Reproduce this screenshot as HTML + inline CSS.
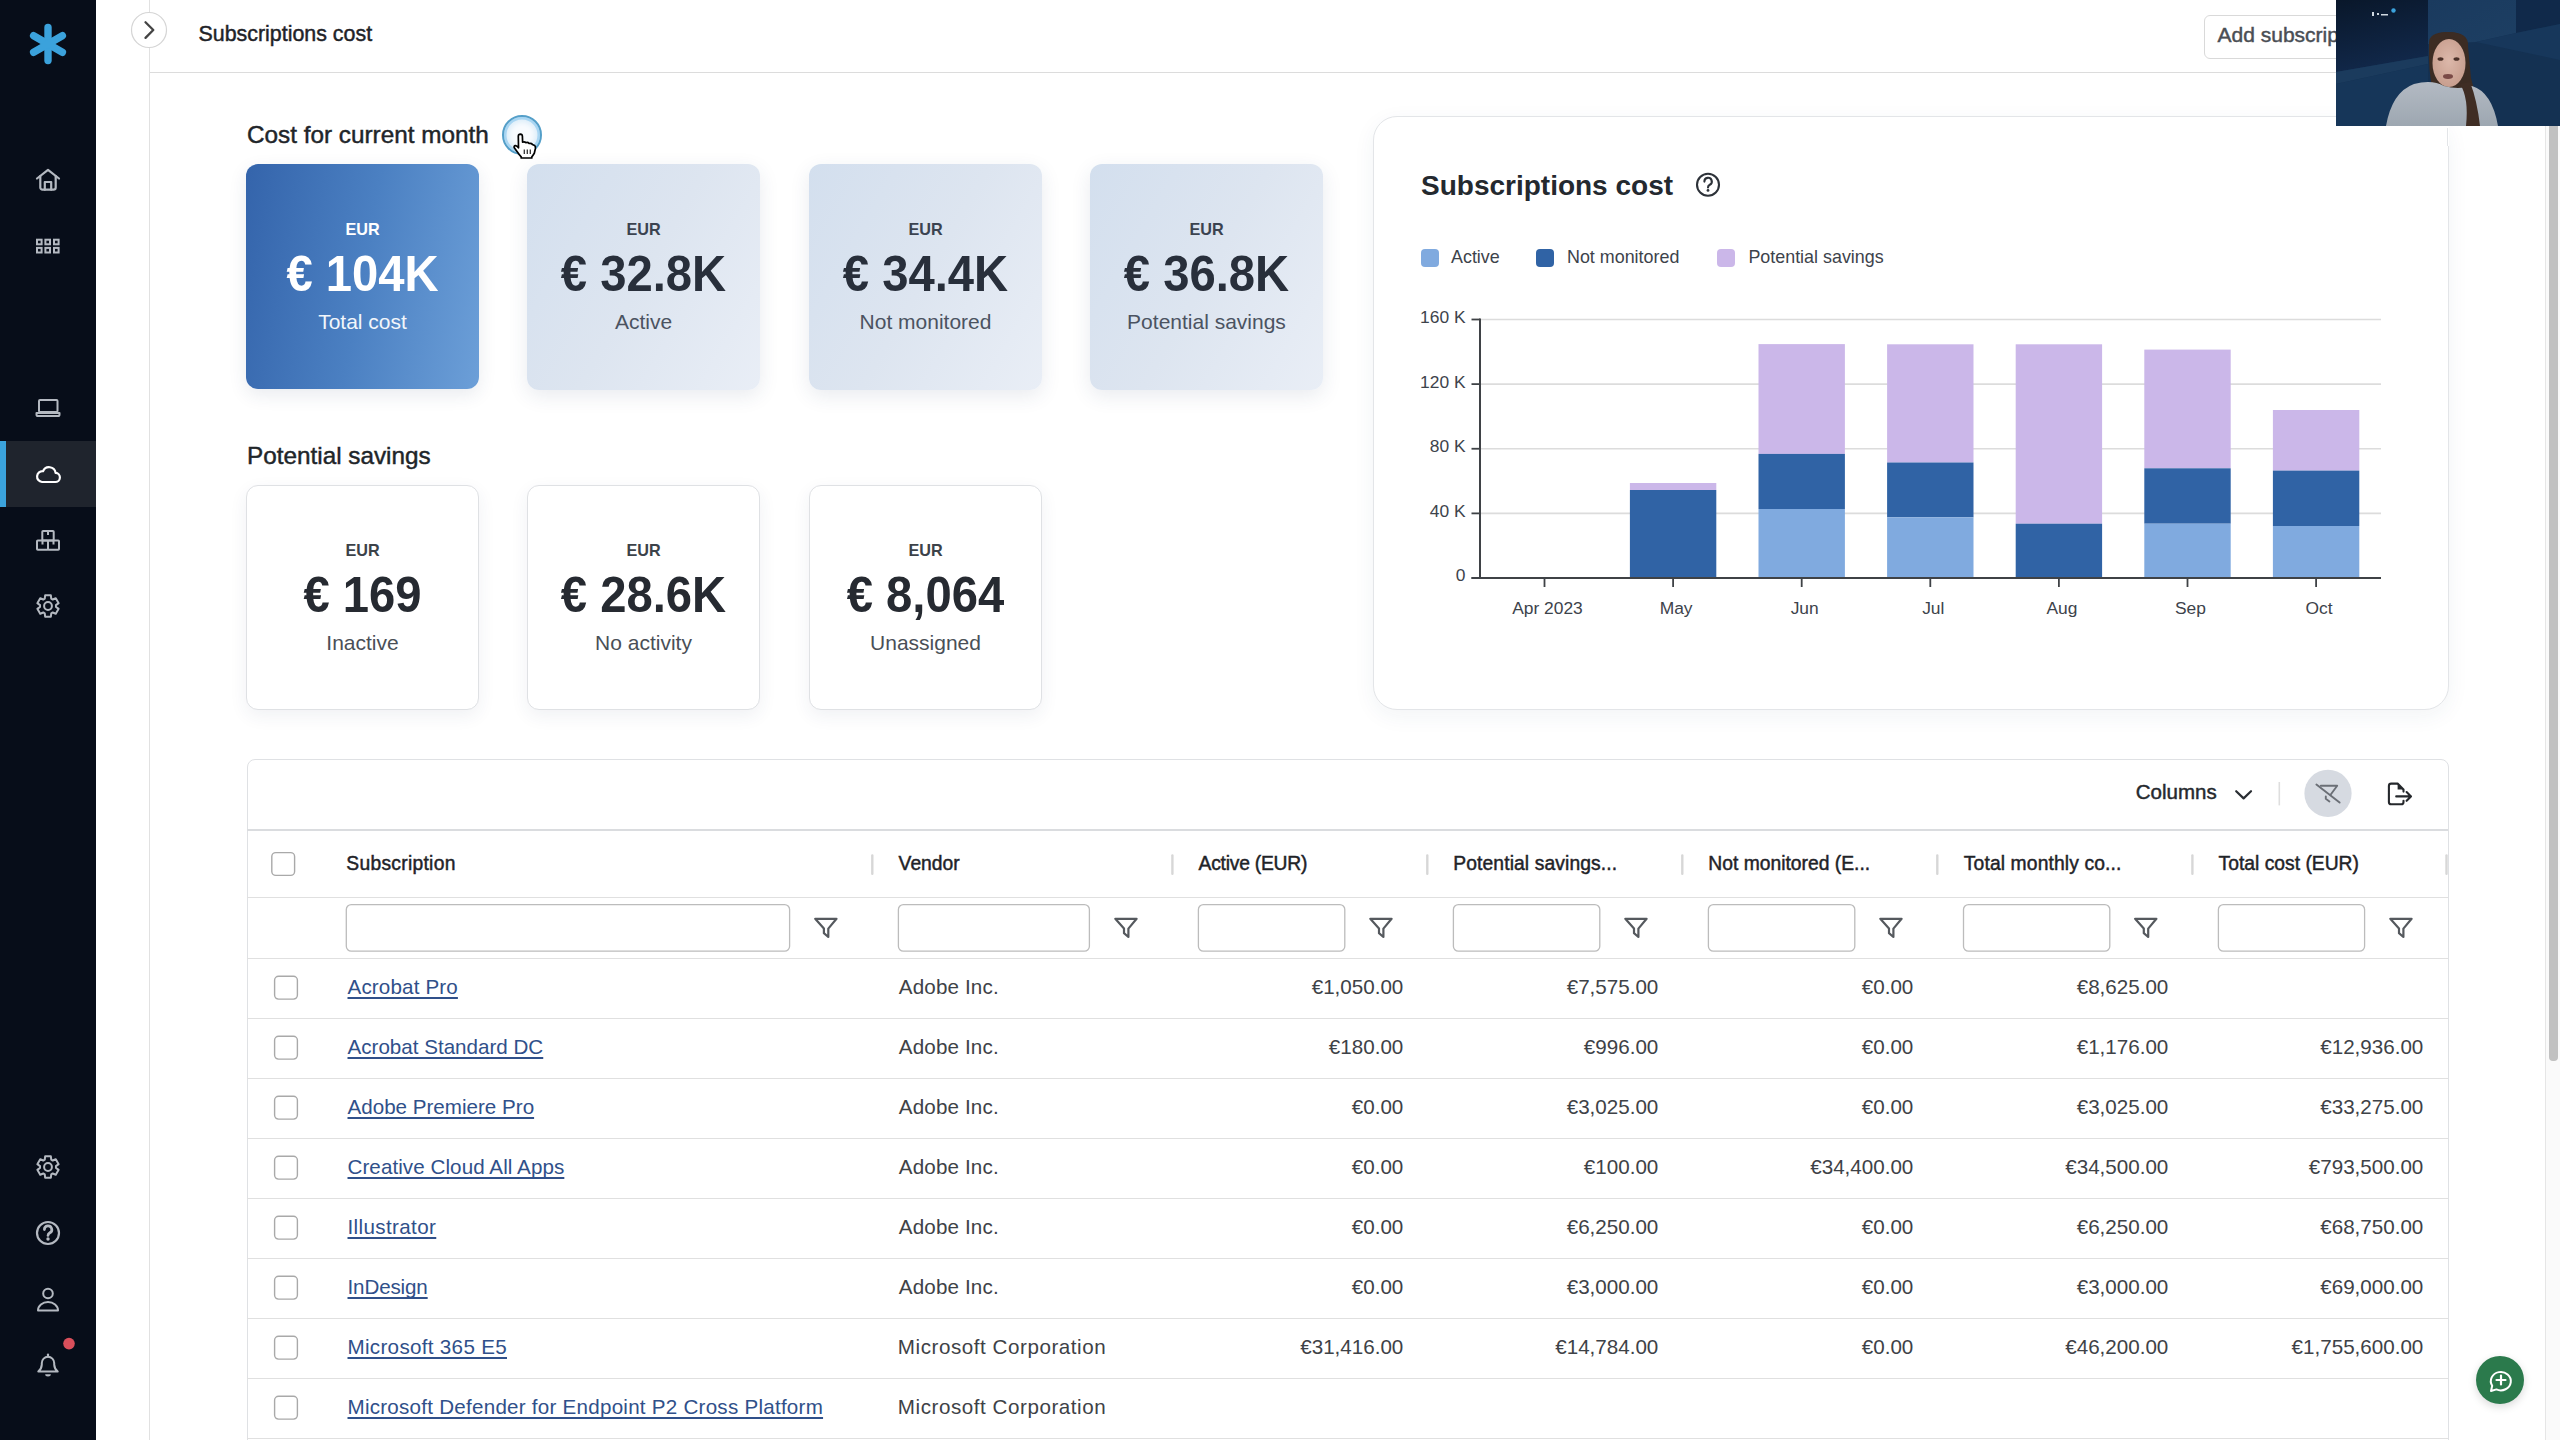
<!DOCTYPE html>
<html><head><meta charset="utf-8"><title>Subscriptions cost</title>
<style>
html,body{margin:0;padding:0;width:2560px;height:1440px;overflow:hidden;background:#fff;font-family:"Liberation Sans", sans-serif;}
.t{position:absolute;white-space:nowrap;font-family:"Liberation Sans", sans-serif;}
</style></head><body>
<div style="position:absolute;left:0px;top:0px;width:96px;height:1440px;background:#070d19;"></div><div style="position:absolute;left:0px;top:441px;width:96px;height:66px;background:#1f242d;"></div><div style="position:absolute;left:0px;top:441px;width:6px;height:66px;background:#3ba3dc;"></div><svg style="position:absolute;left:0;top:0" width="96" height="1440"><line x1="48" y1="27.4" x2="48" y2="60.6" stroke="#3ba2dc" stroke-width="7.4" stroke-linecap="round" transform="rotate(0 48 44)"/><line x1="48" y1="27.4" x2="48" y2="60.6" stroke="#3ba2dc" stroke-width="7.4" stroke-linecap="round" transform="rotate(-60 48 44)"/><line x1="48" y1="27.4" x2="48" y2="60.6" stroke="#3ba2dc" stroke-width="7.4" stroke-linecap="round" transform="rotate(-120 48 44)"/><g fill="none" stroke="#b4b9c1" stroke-width="2.2" stroke-linecap="round" stroke-linejoin="round"><path d="M37 178.5 L48 169.8 L59 178.5"/><path d="M40.3 176 V187.5 a2.2 2.2 0 0 0 2.2 2.2 H53.5 a2.2 2.2 0 0 0 2.2 -2.2 V176"/><path d="M44.8 189.7 V182 H51.2 V189.7"/></g><rect x="37.00" y="239.70" width="4.6" height="4.6" fill="none" stroke="#b4b9c1" stroke-width="2"/><rect x="37.00" y="247.90" width="4.6" height="4.6" fill="none" stroke="#b4b9c1" stroke-width="2"/><rect x="45.40" y="239.70" width="4.6" height="4.6" fill="none" stroke="#b4b9c1" stroke-width="2"/><rect x="45.40" y="247.90" width="4.6" height="4.6" fill="none" stroke="#b4b9c1" stroke-width="2"/><rect x="54.00" y="239.70" width="4.6" height="4.6" fill="none" stroke="#b4b9c1" stroke-width="2"/><rect x="54.00" y="247.90" width="4.6" height="4.6" fill="none" stroke="#b4b9c1" stroke-width="2"/><g fill="none" stroke="#b4b9c1" stroke-width="2" stroke-linejoin="round"><rect x="39" y="400" width="18.5" height="12" rx="1"/><path d="M36.5 413 H59.5 V414.5 a1.6 1.6 0 0 1 -1.6 1.6 H38.1 a1.6 1.6 0 0 1 -1.6 -1.6 Z"/></g><path d="M42 482 H55 a4.6 4.6 0 0 0 0.6 -9.2 a6.6 6.6 0 0 0 -12.6 -1.6 a5.4 5.4 0 0 0 -1 10.8 Z" fill="none" stroke="#ffffff" stroke-width="2.2" stroke-linejoin="round"/><g fill="none" stroke="#b4b9c1" stroke-width="2" stroke-linejoin="round"><rect x="42.3" y="531" width="11.4" height="9.5" rx="0.8"/><rect x="37" y="540.5" width="11" height="9.3" rx="0.8"/><rect x="48" y="540.5" width="11" height="9.3" rx="0.8"/><path d="M48 531 V535 M42.5 540.5 V544.5 M53.5 540.5 V544.5"/></g><polygon points="44.75,598.69 45.15,595.37 50.85,595.37 51.25,598.69 52.70,599.53 55.78,598.22 58.63,603.15 55.96,605.16 55.96,606.84 58.63,608.85 55.78,613.78 52.70,612.47 51.25,613.31 50.85,616.63 45.15,616.63 44.75,613.31 43.30,612.47 40.22,613.78 37.37,608.85 40.04,606.84 40.04,605.16 37.37,603.15 40.22,598.22 43.30,599.53" fill="none" stroke="#b4b9c1" stroke-width="2" stroke-linejoin="round"/><circle cx="48" cy="606" r="3.9" fill="none" stroke="#b4b9c1" stroke-width="2"/><polygon points="44.75,1159.69 45.15,1156.37 50.85,1156.37 51.25,1159.69 52.70,1160.53 55.78,1159.22 58.63,1164.15 55.96,1166.16 55.96,1167.84 58.63,1169.85 55.78,1174.78 52.70,1173.47 51.25,1174.31 50.85,1177.63 45.15,1177.63 44.75,1174.31 43.30,1173.47 40.22,1174.78 37.37,1169.85 40.04,1167.84 40.04,1166.16 37.37,1164.15 40.22,1159.22 43.30,1160.53" fill="none" stroke="#b4b9c1" stroke-width="2" stroke-linejoin="round"/><circle cx="48" cy="1167" r="3.9" fill="none" stroke="#b4b9c1" stroke-width="2"/><circle cx="48" cy="1233" r="11" fill="none" stroke="#b4b9c1" stroke-width="2.2"/><path d="M44.4 1229.6 a3.7 3.7 0 1 1 5.5 3.2 c-1.2 0.7 -1.9 1.3 -1.9 2.6" fill="none" stroke="#b4b9c1" stroke-width="2.7" stroke-linecap="round"/><circle cx="48" cy="1239" r="1.7" fill="#b4b9c1"/><circle cx="48" cy="1293.5" r="4.8" fill="none" stroke="#b4b9c1" stroke-width="2"/><path d="M38 1310.5 a10 8.5 0 0 1 20 0 Z" fill="none" stroke="#b4b9c1" stroke-width="2" stroke-linejoin="round"/><path d="M38.3 1371.6 Q41.6 1368.6 41.8 1364.6 V1363 a6.2 6.2 0 0 1 12.4 0 V1364.6 Q54.4 1368.6 57.7 1371.6 Z" fill="none" stroke="#b4b9c1" stroke-width="2" stroke-linejoin="round"/><path d="M48 1354.6 V1356.6" stroke="#b4b9c1" stroke-width="2.2" stroke-linecap="round"/><path d="M45.2 1374.2 a2.8 2.2 0 0 0 5.6 0 Z" fill="#b4b9c1"/><circle cx="69" cy="1343.6" r="5.8" fill="#d94f5b"/></svg><div style="position:absolute;left:149px;top:0px;width:1px;height:1440px;background:#e1e1e1;"></div><div style="position:absolute;left:150px;top:72px;width:2410px;height:1px;background:#dcdcdc;"></div><svg style="position:absolute;left:128px;top:9px" width="42" height="42"><circle cx="21" cy="21" r="17.5" fill="#fff" stroke="#d5d5d5" stroke-width="1.2"/><path d="M17.5 13.3 L25.3 21 L17.5 28.9" fill="none" stroke="#444444" stroke-width="2.3" stroke-linecap="round" stroke-linejoin="round"/></svg><div class="t" style="top:24.18px;font-size:21.4px;line-height:21.4px;font-weight:400;color:#1f2328;left:198.50px;-webkit-text-stroke:0.45px currentColor;">Subscriptions cost</div><div style="position:absolute;left:2204px;top:14.5px;width:250px;height:44px;border:1.5px solid #d9d9d9;border-radius:6px;box-sizing:border-box;background:#fff;"></div><div class="t" style="top:24.12px;font-size:21px;line-height:21px;font-weight:400;color:#4a4e54;left:2217.50px;-webkit-text-stroke:0.45px currentColor;">Add subscription</div><div class="t" style="top:122.53px;font-size:24.3px;line-height:24.3px;font-weight:400;color:#212529;left:247.00px;-webkit-text-stroke:0.45px currentColor;">Cost for current month</div><div style="position:absolute;left:246px;top:164px;width:233px;height:225px;border-radius:12px;background:linear-gradient(100deg,#3464ab 0%,#4b80c2 50%,#6c9fd8 100%);box-shadow:0 6px 18px rgba(40,60,100,0.10);"></div><div class="t" style="top:220.99px;font-size:16.2px;line-height:16.2px;font-weight:700;color:#ffffff;left:262.50px;width:200px;text-align:center;">EUR</div><div class="t" style="top:251.05px;font-size:47.2px;line-height:47.2px;font-weight:700;color:#ffffff;left:246.00px;width:233px;text-align:center;transform:scaleY(1.07);transform-origin:50% 39.95px;">€ 104K</div><div class="t" style="top:311.02px;font-size:21px;line-height:21px;font-weight:400;color:#f2f6fb;left:246.00px;width:233px;text-align:center;">Total cost</div><div style="position:absolute;left:527px;top:164px;width:233px;height:226px;border-radius:12px;background:linear-gradient(120deg,#d3dfee 0%,#dde5f0 50%,#e9eef6 100%);box-shadow:0 6px 20px rgba(40,60,100,0.10);"></div><div class="t" style="top:220.99px;font-size:16.2px;line-height:16.2px;font-weight:700;color:#3b4350;left:543.50px;width:200px;text-align:center;">EUR</div><div class="t" style="top:251.05px;font-size:47.2px;line-height:47.2px;font-weight:700;color:#282f3b;left:527.00px;width:233px;text-align:center;transform:scaleY(1.07);transform-origin:50% 39.95px;">€ 32.8K</div><div class="t" style="top:311.02px;font-size:21px;line-height:21px;font-weight:400;color:#4b5361;left:527.00px;width:233px;text-align:center;">Active</div><div style="position:absolute;left:809px;top:164px;width:233px;height:226px;border-radius:12px;background:linear-gradient(120deg,#d3dfee 0%,#dde5f0 50%,#e9eef6 100%);box-shadow:0 6px 20px rgba(40,60,100,0.10);"></div><div class="t" style="top:220.99px;font-size:16.2px;line-height:16.2px;font-weight:700;color:#3b4350;left:825.50px;width:200px;text-align:center;">EUR</div><div class="t" style="top:251.05px;font-size:47.2px;line-height:47.2px;font-weight:700;color:#282f3b;left:809.00px;width:233px;text-align:center;transform:scaleY(1.07);transform-origin:50% 39.95px;">€ 34.4K</div><div class="t" style="top:311.02px;font-size:21px;line-height:21px;font-weight:400;color:#4b5361;left:809.00px;width:233px;text-align:center;">Not monitored</div><div style="position:absolute;left:1090px;top:164px;width:233px;height:226px;border-radius:12px;background:linear-gradient(120deg,#d3dfee 0%,#dde5f0 50%,#e9eef6 100%);box-shadow:0 6px 20px rgba(40,60,100,0.10);"></div><div class="t" style="top:220.99px;font-size:16.2px;line-height:16.2px;font-weight:700;color:#3b4350;left:1106.50px;width:200px;text-align:center;">EUR</div><div class="t" style="top:251.05px;font-size:47.2px;line-height:47.2px;font-weight:700;color:#282f3b;left:1090.00px;width:233px;text-align:center;transform:scaleY(1.07);transform-origin:50% 39.95px;">€ 36.8K</div><div class="t" style="top:311.02px;font-size:21px;line-height:21px;font-weight:400;color:#4b5361;left:1090.00px;width:233px;text-align:center;">Potential savings</div><div style="position:absolute;left:501.5px;top:114.5px;width:40px;height:40px;border-radius:50%;box-sizing:border-box;border:2.6px solid #549fc9;box-shadow:inset 0 0 0 2.5px #a9d6f3, inset 0 0 5px 5px #dcedf9;background:#f8fbfe;"></div><svg style="position:absolute;left:512px;top:132px" width="30" height="30"><path d="M6.5 14.5 L6.3 4.2 Q6.4 2.2 8.4 2.2 Q10.3 2.3 10.4 4.2 L10.6 10.2 Q12.6 9.4 13.9 10.7 Q15.9 10 17.1 11.5 Q19.2 10.9 20.4 12.4 L22.6 13.4 Q23.8 14.4 23.3 17 L22.3 21.3 Q20.8 23.8 19.8 24.8 L19.8 26 L9.2 26 L9.2 24.8 Q7.2 22.8 5.2 19.8 L2.3 15.8 Q1.5 14.2 3.2 13.6 Q4.8 13.3 6.5 15.8 Z" fill="#fff" stroke="#000" stroke-width="1.7" stroke-linejoin="round"/><path d="M12.3 17.5 V22 M15.3 17.5 V22 M18.3 17.5 V22" stroke="#333" stroke-width="1.3"/></svg><div class="t" style="top:443.63px;font-size:24.3px;line-height:24.3px;font-weight:400;color:#212529;left:247.00px;-webkit-text-stroke:0.45px currentColor;">Potential savings</div><div style="position:absolute;left:246px;top:485px;width:233px;height:225px;border-radius:12px;background:#fff;border:1.2px solid #dfe1e4;box-sizing:border-box;box-shadow:0 6px 18px rgba(40,60,100,0.07);"></div><div class="t" style="top:542.19px;font-size:16.2px;line-height:16.2px;font-weight:700;color:#3c4249;left:262.50px;width:200px;text-align:center;">EUR</div><div class="t" style="top:572.35px;font-size:47.2px;line-height:47.2px;font-weight:700;color:#262a31;left:246.00px;width:233px;text-align:center;transform:scaleY(1.07);transform-origin:50% 39.95px;">€ 169</div><div class="t" style="top:631.82px;font-size:21px;line-height:21px;font-weight:400;color:#4a4f57;left:246.00px;width:233px;text-align:center;">Inactive</div><div style="position:absolute;left:527px;top:485px;width:233px;height:225px;border-radius:12px;background:#fff;border:1.2px solid #dfe1e4;box-sizing:border-box;box-shadow:0 6px 18px rgba(40,60,100,0.07);"></div><div class="t" style="top:542.19px;font-size:16.2px;line-height:16.2px;font-weight:700;color:#3c4249;left:543.50px;width:200px;text-align:center;">EUR</div><div class="t" style="top:572.35px;font-size:47.2px;line-height:47.2px;font-weight:700;color:#262a31;left:527.00px;width:233px;text-align:center;transform:scaleY(1.07);transform-origin:50% 39.95px;">€ 28.6K</div><div class="t" style="top:631.82px;font-size:21px;line-height:21px;font-weight:400;color:#4a4f57;left:527.00px;width:233px;text-align:center;">No activity</div><div style="position:absolute;left:809px;top:485px;width:233px;height:225px;border-radius:12px;background:#fff;border:1.2px solid #dfe1e4;box-sizing:border-box;box-shadow:0 6px 18px rgba(40,60,100,0.07);"></div><div class="t" style="top:542.19px;font-size:16.2px;line-height:16.2px;font-weight:700;color:#3c4249;left:825.50px;width:200px;text-align:center;">EUR</div><div class="t" style="top:572.35px;font-size:47.2px;line-height:47.2px;font-weight:700;color:#262a31;left:809.00px;width:233px;text-align:center;transform:scaleY(1.07);transform-origin:50% 39.95px;">€ 8,064</div><div class="t" style="top:631.82px;font-size:21px;line-height:21px;font-weight:400;color:#4a4f57;left:809.00px;width:233px;text-align:center;">Unassigned</div><div style="position:absolute;left:1372.5px;top:116px;width:1076px;height:594px;border-radius:24px;background:#fff;border:1.2px solid #e3e5e8;box-sizing:border-box;box-shadow:0 6px 22px rgba(40,60,100,0.06);"></div><div class="t" style="top:171.90px;font-size:28.0px;line-height:28.0px;font-weight:700;color:#24292f;left:1421.00px;">Subscriptions cost</div><svg style="position:absolute;left:1692px;top:169px" width="32" height="32"><circle cx="16" cy="15.7" r="11" fill="none" stroke="#2d3239" stroke-width="2.1"/><path d="M12.4 12.6 a3.7 3.7 0 1 1 5.4 3.2 c-1.1 0.6 -1.8 1.2 -1.8 2.6" fill="none" stroke="#2d3239" stroke-width="2.1" stroke-linecap="round"/><circle cx="16" cy="21.4" r="1.4" fill="#2d3239"/></svg><div style="position:absolute;left:1421.2px;top:249.2px;width:17.8px;height:17.8px;background:#80aadf;border-radius:4px;"></div><div class="t" style="top:248.60px;font-size:17.9px;line-height:17.9px;font-weight:400;color:#3d434b;left:1451.00px;">Active</div><div style="position:absolute;left:1536px;top:249.2px;width:17.8px;height:17.8px;background:#3063a5;border-radius:4px;"></div><div class="t" style="top:248.60px;font-size:17.9px;line-height:17.9px;font-weight:400;color:#3d434b;left:1567.00px;">Not monitored</div><div style="position:absolute;left:1717.3px;top:249.2px;width:17.8px;height:17.8px;background:#cbb7e9;border-radius:4px;"></div><div class="t" style="top:248.60px;font-size:17.9px;line-height:17.9px;font-weight:400;color:#3d434b;left:1748.40px;">Potential savings</div><svg style="position:absolute;left:0;top:0" width="2560" height="720"><line x1="1471.5" y1="578.00" x2="1480" y2="578.00" stroke="#3f4246" stroke-width="1.8"/><line x1="1480" y1="513.38" x2="2381" y2="513.38" stroke="#dcdcdc" stroke-width="1.6"/><line x1="1471.5" y1="513.38" x2="1480" y2="513.38" stroke="#3f4246" stroke-width="1.8"/><line x1="1480" y1="448.75" x2="2381" y2="448.75" stroke="#dcdcdc" stroke-width="1.6"/><line x1="1471.5" y1="448.75" x2="1480" y2="448.75" stroke="#3f4246" stroke-width="1.8"/><line x1="1480" y1="384.12" x2="2381" y2="384.12" stroke="#dcdcdc" stroke-width="1.6"/><line x1="1471.5" y1="384.12" x2="1480" y2="384.12" stroke="#3f4246" stroke-width="1.8"/><line x1="1480" y1="319.50" x2="2381" y2="319.50" stroke="#dcdcdc" stroke-width="1.6"/><line x1="1471.5" y1="319.50" x2="1480" y2="319.50" stroke="#3f4246" stroke-width="1.8"/><rect x="1629.90" y="483" width="86.4" height="7.00" fill="#cbb7e9"/><rect x="1629.90" y="490" width="86.4" height="88.00" fill="#3063a5"/><rect x="1758.50" y="344.1" width="86.4" height="109.80" fill="#cbb7e9"/><rect x="1758.50" y="453.9" width="86.4" height="55.10" fill="#3063a5"/><rect x="1758.50" y="509" width="86.4" height="69.00" fill="#80aadf"/><rect x="1887.10" y="344.3" width="86.4" height="118.20" fill="#cbb7e9"/><rect x="1887.10" y="462.5" width="86.4" height="54.80" fill="#3063a5"/><rect x="1887.10" y="517.3" width="86.4" height="60.70" fill="#80aadf"/><rect x="2015.70" y="344.3" width="86.4" height="179.40" fill="#cbb7e9"/><rect x="2015.70" y="523.7" width="86.4" height="54.30" fill="#3063a5"/><rect x="2144.30" y="349.6" width="86.4" height="118.70" fill="#cbb7e9"/><rect x="2144.30" y="468.3" width="86.4" height="55.40" fill="#3063a5"/><rect x="2144.30" y="523.7" width="86.4" height="54.30" fill="#80aadf"/><rect x="2272.90" y="410" width="86.4" height="60.60" fill="#cbb7e9"/><rect x="2272.90" y="470.6" width="86.4" height="55.40" fill="#3063a5"/><rect x="2272.90" y="526" width="86.4" height="52.00" fill="#80aadf"/><line x1="1480" y1="318.6" x2="1480" y2="579" stroke="#3f4246" stroke-width="2"/><line x1="1471.5" y1="578" x2="2381" y2="578" stroke="#3f4246" stroke-width="2"/><line x1="1544.50" y1="578" x2="1544.50" y2="587" stroke="#3f4246" stroke-width="1.8"/><line x1="1673.10" y1="578" x2="1673.10" y2="587" stroke="#3f4246" stroke-width="1.8"/><line x1="1801.70" y1="578" x2="1801.70" y2="587" stroke="#3f4246" stroke-width="1.8"/><line x1="1930.30" y1="578" x2="1930.30" y2="587" stroke="#3f4246" stroke-width="1.8"/><line x1="2058.90" y1="578" x2="2058.90" y2="587" stroke="#3f4246" stroke-width="1.8"/><line x1="2187.50" y1="578" x2="2187.50" y2="587" stroke="#3f4246" stroke-width="1.8"/><line x1="2316.10" y1="578" x2="2316.10" y2="587" stroke="#3f4246" stroke-width="1.8"/></svg><div class="t" style="top:567.37px;font-size:17.4px;line-height:17.4px;font-weight:400;color:#3d434b;left:1365.50px;width:100px;text-align:right;">0</div><div class="t" style="top:502.75px;font-size:17.4px;line-height:17.4px;font-weight:400;color:#3d434b;left:1365.50px;width:100px;text-align:right;">40 K</div><div class="t" style="top:438.12px;font-size:17.4px;line-height:17.4px;font-weight:400;color:#3d434b;left:1365.50px;width:100px;text-align:right;">80 K</div><div class="t" style="top:373.50px;font-size:17.4px;line-height:17.4px;font-weight:400;color:#3d434b;left:1365.50px;width:100px;text-align:right;">120 K</div><div class="t" style="top:308.87px;font-size:17.4px;line-height:17.4px;font-weight:400;color:#3d434b;left:1365.50px;width:100px;text-align:right;">160 K</div><div class="t" style="top:599.87px;font-size:17.4px;line-height:17.4px;font-weight:400;color:#3d434b;left:1477.50px;width:140px;text-align:center;">Apr 2023</div><div class="t" style="top:599.87px;font-size:17.4px;line-height:17.4px;font-weight:400;color:#3d434b;left:1606.10px;width:140px;text-align:center;">May</div><div class="t" style="top:599.87px;font-size:17.4px;line-height:17.4px;font-weight:400;color:#3d434b;left:1734.70px;width:140px;text-align:center;">Jun</div><div class="t" style="top:599.87px;font-size:17.4px;line-height:17.4px;font-weight:400;color:#3d434b;left:1863.30px;width:140px;text-align:center;">Jul</div><div class="t" style="top:599.87px;font-size:17.4px;line-height:17.4px;font-weight:400;color:#3d434b;left:1991.90px;width:140px;text-align:center;">Aug</div><div class="t" style="top:599.87px;font-size:17.4px;line-height:17.4px;font-weight:400;color:#3d434b;left:2120.50px;width:140px;text-align:center;">Sep</div><div class="t" style="top:599.87px;font-size:17.4px;line-height:17.4px;font-weight:400;color:#3d434b;left:2249.10px;width:140px;text-align:center;">Oct</div><div style="position:absolute;left:246.5px;top:758.5px;width:2202px;height:720px;background:#fff;border:1.2px solid #dfe1e4;border-radius:8px;box-sizing:border-box;"></div><div class="t" style="top:782.25px;font-size:20.5px;line-height:20.5px;font-weight:400;color:#25292e;left:2135.80px;-webkit-text-stroke:0.45px currentColor;">Columns</div><svg style="position:absolute;left:0;top:0" width="2560" height="1440"><path d="M2236.2 791.2 L2243.6 798.4 L2251 791.2" fill="none" stroke="#2a2e33" stroke-width="2.2" stroke-linecap="round" stroke-linejoin="round"/><line x1="2279.3" y1="782" x2="2279.3" y2="805.4" stroke="#dedede" stroke-width="1.6"/><circle cx="2328" cy="793.4" r="23.6" fill="#d6dae1"/><path d="M2320.8 785.8 H2337.2 L2330.4 795" fill="none" stroke="#6b6f76" stroke-width="1.9" stroke-linejoin="round" stroke-linecap="round"/><path d="M2325.8 796.4 V798.8 L2329.4 801.4" fill="none" stroke="#6b6f76" stroke-width="1.9" stroke-linejoin="round" stroke-linecap="round"/><line x1="2316.4" y1="784.6" x2="2339.6" y2="802.6" stroke="#6b6f76" stroke-width="1.9" stroke-linecap="round"/><path d="M2403.5 791.6 V789.4 L2397.6 783.6 H2391.2 a2.3 2.3 0 0 0 -2.3 2.3 V801.9 a2.3 2.3 0 0 0 2.3 2.3 H2401.2 a2.3 2.3 0 0 0 2.3 -2.3 V800.8" fill="none" stroke="#25282c" stroke-width="2.1" stroke-linejoin="round" stroke-linecap="round"/><path d="M2397.6 783.8 V789.6 H2403.4 Z" fill="#25282c"/><path d="M2396.2 796.4 H2411 M2406.6 792 L2411 796.4 L2406.6 800.8" fill="none" stroke="#25282c" stroke-width="2.1" stroke-linecap="round" stroke-linejoin="round"/><line x1="247" y1="830" x2="2448" y2="830" stroke="#dadcdf" stroke-width="1.8"/><line x1="247" y1="897.5" x2="2448" y2="897.5" stroke="#e0e0e0" stroke-width="1.2"/><line x1="247" y1="958.5" x2="2448" y2="958.5" stroke="#e0e0e0" stroke-width="1.2"/><line x1="247" y1="1018.5" x2="2448" y2="1018.5" stroke="#e0e0e0" stroke-width="1.2"/><line x1="247" y1="1078.5" x2="2448" y2="1078.5" stroke="#e0e0e0" stroke-width="1.2"/><line x1="247" y1="1138.5" x2="2448" y2="1138.5" stroke="#e0e0e0" stroke-width="1.2"/><line x1="247" y1="1198.5" x2="2448" y2="1198.5" stroke="#e0e0e0" stroke-width="1.2"/><line x1="247" y1="1258.5" x2="2448" y2="1258.5" stroke="#e0e0e0" stroke-width="1.2"/><line x1="247" y1="1318.5" x2="2448" y2="1318.5" stroke="#e0e0e0" stroke-width="1.2"/><line x1="247" y1="1378.5" x2="2448" y2="1378.5" stroke="#e0e0e0" stroke-width="1.2"/><line x1="247" y1="1438.5" x2="2448" y2="1438.5" stroke="#e0e0e0" stroke-width="1.2"/><line x1="872.3" y1="855.5" x2="872.3" y2="873.8" stroke="#d7d7d7" stroke-width="2.4" stroke-linecap="round"/><line x1="1172.4" y1="855.5" x2="1172.4" y2="873.8" stroke="#d7d7d7" stroke-width="2.4" stroke-linecap="round"/><line x1="1427.3" y1="855.5" x2="1427.3" y2="873.8" stroke="#d7d7d7" stroke-width="2.4" stroke-linecap="round"/><line x1="1682.3" y1="855.5" x2="1682.3" y2="873.8" stroke="#d7d7d7" stroke-width="2.4" stroke-linecap="round"/><line x1="1937.3" y1="855.5" x2="1937.3" y2="873.8" stroke="#d7d7d7" stroke-width="2.4" stroke-linecap="round"/><line x1="2192.4" y1="855.5" x2="2192.4" y2="873.8" stroke="#d7d7d7" stroke-width="2.4" stroke-linecap="round"/><line x1="2446.5" y1="855.5" x2="2446.5" y2="873.8" stroke="#d7d7d7" stroke-width="2.4" stroke-linecap="round"/><rect x="271.8" y="852.6" width="22.8" height="22.8" rx="4" fill="#fff" stroke="#a9a9a9" stroke-width="1.4"/><rect x="346.3" y="904.6" width="443.3" height="46.6" rx="5" fill="#fff" stroke="#bcbcbc" stroke-width="1.3"/><path d="M815.1999999999999 918.8 H836.5 L828.3 928.6 V937 L823.9 933.2 V928.6 Z" fill="none" stroke="#55595e" stroke-width="2.2" stroke-linejoin="round"/><rect x="898.4" y="904.6" width="191.0" height="46.6" rx="5" fill="#fff" stroke="#bcbcbc" stroke-width="1.3"/><path d="M1115.3 918.8 H1136.6 L1128.4 928.6 V937 L1124 933.2 V928.6 Z" fill="none" stroke="#55595e" stroke-width="2.2" stroke-linejoin="round"/><rect x="1198.4" y="904.6" width="146.4" height="46.6" rx="5" fill="#fff" stroke="#bcbcbc" stroke-width="1.3"/><path d="M1370.3 918.8 H1391.6 L1383.4 928.6 V937 L1379 933.2 V928.6 Z" fill="none" stroke="#55595e" stroke-width="2.2" stroke-linejoin="round"/><rect x="1453.4" y="904.6" width="146.4" height="46.6" rx="5" fill="#fff" stroke="#bcbcbc" stroke-width="1.3"/><path d="M1625.3 918.8 H1646.6 L1638.4 928.6 V937 L1634 933.2 V928.6 Z" fill="none" stroke="#55595e" stroke-width="2.2" stroke-linejoin="round"/><rect x="1708.4" y="904.6" width="146.4" height="46.6" rx="5" fill="#fff" stroke="#bcbcbc" stroke-width="1.3"/><path d="M1880.3 918.8 H1901.6 L1893.4 928.6 V937 L1889 933.2 V928.6 Z" fill="none" stroke="#55595e" stroke-width="2.2" stroke-linejoin="round"/><rect x="1963.5" y="904.6" width="146.3" height="46.6" rx="5" fill="#fff" stroke="#bcbcbc" stroke-width="1.3"/><path d="M2135.1000000000004 918.8 H2156.4 L2148.2000000000003 928.6 V937 L2143.8 933.2 V928.6 Z" fill="none" stroke="#55595e" stroke-width="2.2" stroke-linejoin="round"/><rect x="2218.4" y="904.6" width="146.2" height="46.6" rx="5" fill="#fff" stroke="#bcbcbc" stroke-width="1.3"/><path d="M2390.3 918.8 H2411.6 L2403.4 928.6 V937 L2399 933.2 V928.6 Z" fill="none" stroke="#55595e" stroke-width="2.2" stroke-linejoin="round"/><rect x="274.6" y="976.3" width="22.8" height="22.8" rx="4" fill="#fff" stroke="#a9a9a9" stroke-width="1.4"/><rect x="274.6" y="1036.3" width="22.8" height="22.8" rx="4" fill="#fff" stroke="#a9a9a9" stroke-width="1.4"/><rect x="274.6" y="1096.3" width="22.8" height="22.8" rx="4" fill="#fff" stroke="#a9a9a9" stroke-width="1.4"/><rect x="274.6" y="1156.3" width="22.8" height="22.8" rx="4" fill="#fff" stroke="#a9a9a9" stroke-width="1.4"/><rect x="274.6" y="1216.3" width="22.8" height="22.8" rx="4" fill="#fff" stroke="#a9a9a9" stroke-width="1.4"/><rect x="274.6" y="1276.3" width="22.8" height="22.8" rx="4" fill="#fff" stroke="#a9a9a9" stroke-width="1.4"/><rect x="274.6" y="1336.3" width="22.8" height="22.8" rx="4" fill="#fff" stroke="#a9a9a9" stroke-width="1.4"/><rect x="274.6" y="1396.3" width="22.8" height="22.8" rx="4" fill="#fff" stroke="#a9a9a9" stroke-width="1.4"/></svg><div class="t" style="top:853.66px;font-size:19.3px;line-height:19.3px;font-weight:400;color:#1f2328;left:346.30px;-webkit-text-stroke:0.45px currentColor;letter-spacing:0.27px;">Subscription</div><div class="t" style="top:853.66px;font-size:19.3px;line-height:19.3px;font-weight:400;color:#1f2328;left:898.60px;-webkit-text-stroke:0.45px currentColor;letter-spacing:0px;">Vendor</div><div class="t" style="top:853.66px;font-size:19.3px;line-height:19.3px;font-weight:400;color:#1f2328;left:1198.50px;-webkit-text-stroke:0.45px currentColor;letter-spacing:-0.23px;">Active (EUR)</div><div class="t" style="top:853.66px;font-size:19.3px;line-height:19.3px;font-weight:400;color:#1f2328;left:1453.30px;-webkit-text-stroke:0.45px currentColor;letter-spacing:0.1px;">Potential savings...</div><div class="t" style="top:853.66px;font-size:19.3px;line-height:19.3px;font-weight:400;color:#1f2328;left:1708.30px;-webkit-text-stroke:0.45px currentColor;letter-spacing:0px;">Not monitored (E...</div><div class="t" style="top:853.66px;font-size:19.3px;line-height:19.3px;font-weight:400;color:#1f2328;left:1963.80px;-webkit-text-stroke:0.45px currentColor;letter-spacing:0.12px;">Total monthly co...</div><div class="t" style="top:853.66px;font-size:19.3px;line-height:19.3px;font-weight:400;color:#1f2328;left:2218.60px;-webkit-text-stroke:0.45px currentColor;letter-spacing:0px;">Total cost (EUR)</div><div class="t" style="top:976.56px;font-size:20.6px;line-height:20.6px;font-weight:400;color:#30508a;left:347.50px;letter-spacing:0.15px;text-decoration:underline;text-decoration-thickness:1.6px;text-underline-offset:3px;text-decoration-skip-ink:none;">Acrobat Pro</div><div class="t" style="top:976.56px;font-size:20.6px;line-height:20.6px;font-weight:400;color:#3e4247;left:898.80px;letter-spacing:0.15px;">Adobe Inc.</div><div class="t" style="top:976.56px;font-size:20.6px;line-height:20.6px;font-weight:400;color:#3e4247;left:1163.30px;width:240px;text-align:right;">€1,050.00</div><div class="t" style="top:976.56px;font-size:20.6px;line-height:20.6px;font-weight:400;color:#3e4247;left:1418.30px;width:240px;text-align:right;">€7,575.00</div><div class="t" style="top:976.56px;font-size:20.6px;line-height:20.6px;font-weight:400;color:#3e4247;left:1673.30px;width:240px;text-align:right;">€0.00</div><div class="t" style="top:976.56px;font-size:20.6px;line-height:20.6px;font-weight:400;color:#3e4247;left:1928.30px;width:240px;text-align:right;">€8,625.00</div><div class="t" style="top:1036.56px;font-size:20.6px;line-height:20.6px;font-weight:400;color:#30508a;left:347.50px;letter-spacing:0px;text-decoration:underline;text-decoration-thickness:1.6px;text-underline-offset:3px;text-decoration-skip-ink:none;">Acrobat Standard DC</div><div class="t" style="top:1036.56px;font-size:20.6px;line-height:20.6px;font-weight:400;color:#3e4247;left:898.80px;letter-spacing:0.15px;">Adobe Inc.</div><div class="t" style="top:1036.56px;font-size:20.6px;line-height:20.6px;font-weight:400;color:#3e4247;left:1163.30px;width:240px;text-align:right;">€180.00</div><div class="t" style="top:1036.56px;font-size:20.6px;line-height:20.6px;font-weight:400;color:#3e4247;left:1418.30px;width:240px;text-align:right;">€996.00</div><div class="t" style="top:1036.56px;font-size:20.6px;line-height:20.6px;font-weight:400;color:#3e4247;left:1673.30px;width:240px;text-align:right;">€0.00</div><div class="t" style="top:1036.56px;font-size:20.6px;line-height:20.6px;font-weight:400;color:#3e4247;left:1928.30px;width:240px;text-align:right;">€1,176.00</div><div class="t" style="top:1036.56px;font-size:20.6px;line-height:20.6px;font-weight:400;color:#3e4247;left:2183.30px;width:240px;text-align:right;">€12,936.00</div><div class="t" style="top:1096.56px;font-size:20.6px;line-height:20.6px;font-weight:400;color:#30508a;left:347.50px;letter-spacing:0px;text-decoration:underline;text-decoration-thickness:1.6px;text-underline-offset:3px;text-decoration-skip-ink:none;">Adobe Premiere Pro</div><div class="t" style="top:1096.56px;font-size:20.6px;line-height:20.6px;font-weight:400;color:#3e4247;left:898.80px;letter-spacing:0.15px;">Adobe Inc.</div><div class="t" style="top:1096.56px;font-size:20.6px;line-height:20.6px;font-weight:400;color:#3e4247;left:1163.30px;width:240px;text-align:right;">€0.00</div><div class="t" style="top:1096.56px;font-size:20.6px;line-height:20.6px;font-weight:400;color:#3e4247;left:1418.30px;width:240px;text-align:right;">€3,025.00</div><div class="t" style="top:1096.56px;font-size:20.6px;line-height:20.6px;font-weight:400;color:#3e4247;left:1673.30px;width:240px;text-align:right;">€0.00</div><div class="t" style="top:1096.56px;font-size:20.6px;line-height:20.6px;font-weight:400;color:#3e4247;left:1928.30px;width:240px;text-align:right;">€3,025.00</div><div class="t" style="top:1096.56px;font-size:20.6px;line-height:20.6px;font-weight:400;color:#3e4247;left:2183.30px;width:240px;text-align:right;">€33,275.00</div><div class="t" style="top:1156.56px;font-size:20.6px;line-height:20.6px;font-weight:400;color:#30508a;left:347.50px;letter-spacing:0.07px;text-decoration:underline;text-decoration-thickness:1.6px;text-underline-offset:3px;text-decoration-skip-ink:none;">Creative Cloud All Apps</div><div class="t" style="top:1156.56px;font-size:20.6px;line-height:20.6px;font-weight:400;color:#3e4247;left:898.80px;letter-spacing:0.15px;">Adobe Inc.</div><div class="t" style="top:1156.56px;font-size:20.6px;line-height:20.6px;font-weight:400;color:#3e4247;left:1163.30px;width:240px;text-align:right;">€0.00</div><div class="t" style="top:1156.56px;font-size:20.6px;line-height:20.6px;font-weight:400;color:#3e4247;left:1418.30px;width:240px;text-align:right;">€100.00</div><div class="t" style="top:1156.56px;font-size:20.6px;line-height:20.6px;font-weight:400;color:#3e4247;left:1673.30px;width:240px;text-align:right;">€34,400.00</div><div class="t" style="top:1156.56px;font-size:20.6px;line-height:20.6px;font-weight:400;color:#3e4247;left:1928.30px;width:240px;text-align:right;">€34,500.00</div><div class="t" style="top:1156.56px;font-size:20.6px;line-height:20.6px;font-weight:400;color:#3e4247;left:2183.30px;width:240px;text-align:right;">€793,500.00</div><div class="t" style="top:1216.56px;font-size:20.6px;line-height:20.6px;font-weight:400;color:#30508a;left:347.50px;letter-spacing:0.37px;text-decoration:underline;text-decoration-thickness:1.6px;text-underline-offset:3px;text-decoration-skip-ink:none;">Illustrator</div><div class="t" style="top:1216.56px;font-size:20.6px;line-height:20.6px;font-weight:400;color:#3e4247;left:898.80px;letter-spacing:0.15px;">Adobe Inc.</div><div class="t" style="top:1216.56px;font-size:20.6px;line-height:20.6px;font-weight:400;color:#3e4247;left:1163.30px;width:240px;text-align:right;">€0.00</div><div class="t" style="top:1216.56px;font-size:20.6px;line-height:20.6px;font-weight:400;color:#3e4247;left:1418.30px;width:240px;text-align:right;">€6,250.00</div><div class="t" style="top:1216.56px;font-size:20.6px;line-height:20.6px;font-weight:400;color:#3e4247;left:1673.30px;width:240px;text-align:right;">€0.00</div><div class="t" style="top:1216.56px;font-size:20.6px;line-height:20.6px;font-weight:400;color:#3e4247;left:1928.30px;width:240px;text-align:right;">€6,250.00</div><div class="t" style="top:1216.56px;font-size:20.6px;line-height:20.6px;font-weight:400;color:#3e4247;left:2183.30px;width:240px;text-align:right;">€68,750.00</div><div class="t" style="top:1276.56px;font-size:20.6px;line-height:20.6px;font-weight:400;color:#30508a;left:347.50px;letter-spacing:-0.14px;text-decoration:underline;text-decoration-thickness:1.6px;text-underline-offset:3px;text-decoration-skip-ink:none;">InDesign</div><div class="t" style="top:1276.56px;font-size:20.6px;line-height:20.6px;font-weight:400;color:#3e4247;left:898.80px;letter-spacing:0.15px;">Adobe Inc.</div><div class="t" style="top:1276.56px;font-size:20.6px;line-height:20.6px;font-weight:400;color:#3e4247;left:1163.30px;width:240px;text-align:right;">€0.00</div><div class="t" style="top:1276.56px;font-size:20.6px;line-height:20.6px;font-weight:400;color:#3e4247;left:1418.30px;width:240px;text-align:right;">€3,000.00</div><div class="t" style="top:1276.56px;font-size:20.6px;line-height:20.6px;font-weight:400;color:#3e4247;left:1673.30px;width:240px;text-align:right;">€0.00</div><div class="t" style="top:1276.56px;font-size:20.6px;line-height:20.6px;font-weight:400;color:#3e4247;left:1928.30px;width:240px;text-align:right;">€3,000.00</div><div class="t" style="top:1276.56px;font-size:20.6px;line-height:20.6px;font-weight:400;color:#3e4247;left:2183.30px;width:240px;text-align:right;">€69,000.00</div><div class="t" style="top:1336.56px;font-size:20.6px;line-height:20.6px;font-weight:400;color:#30508a;left:347.50px;letter-spacing:0.31px;text-decoration:underline;text-decoration-thickness:1.6px;text-underline-offset:3px;text-decoration-skip-ink:none;">Microsoft 365 E5</div><div class="t" style="top:1336.56px;font-size:20.6px;line-height:20.6px;font-weight:400;color:#3e4247;left:897.80px;letter-spacing:0.55px;">Microsoft Corporation</div><div class="t" style="top:1336.56px;font-size:20.6px;line-height:20.6px;font-weight:400;color:#3e4247;left:1163.30px;width:240px;text-align:right;">€31,416.00</div><div class="t" style="top:1336.56px;font-size:20.6px;line-height:20.6px;font-weight:400;color:#3e4247;left:1418.30px;width:240px;text-align:right;">€14,784.00</div><div class="t" style="top:1336.56px;font-size:20.6px;line-height:20.6px;font-weight:400;color:#3e4247;left:1673.30px;width:240px;text-align:right;">€0.00</div><div class="t" style="top:1336.56px;font-size:20.6px;line-height:20.6px;font-weight:400;color:#3e4247;left:1928.30px;width:240px;text-align:right;">€46,200.00</div><div class="t" style="top:1336.56px;font-size:20.6px;line-height:20.6px;font-weight:400;color:#3e4247;left:2183.30px;width:240px;text-align:right;">€1,755,600.00</div><div class="t" style="top:1396.56px;font-size:20.6px;line-height:20.6px;font-weight:400;color:#30508a;left:347.50px;letter-spacing:0.245px;text-decoration:underline;text-decoration-thickness:1.6px;text-underline-offset:3px;text-decoration-skip-ink:none;">Microsoft Defender for Endpoint P2 Cross Platform</div><div class="t" style="top:1396.56px;font-size:20.6px;line-height:20.6px;font-weight:400;color:#3e4247;left:897.80px;letter-spacing:0.55px;">Microsoft Corporation</div><div style="position:absolute;left:2545px;top:0px;width:15px;height:1440px;background:#fafafa;border-left:1px solid #e6e6e6;box-sizing:border-box;"></div><div style="position:absolute;left:2549px;top:0px;width:8.5px;height:1061px;background:#c1c1c1;border-radius:4px;"></div><div style="position:absolute;left:2476px;top:1356px;width:48px;height:48px;border-radius:50%;background:#2b7a4c;box-shadow:0 3px 8px rgba(0,0,0,0.15)"></div><svg style="position:absolute;left:2476px;top:1356px" width="48" height="48"><path d="M16.2 29.8 a10 9.2 0 1 1 4.2 3.6 L15 35 Z" fill="none" stroke="#fff" stroke-width="2" stroke-linejoin="round"/><path d="M25 19.5 V28.5 M20.5 24 H29.5" stroke="#fff" stroke-width="2.2" stroke-linecap="round"/></svg><div style="position:absolute;left:2336px;top:0;width:224px;height:126px;overflow:hidden;background:#143152"><svg style="position:absolute;left:0;top:0;filter:blur(0.7px)" width="224" height="126" viewBox="0 0 224 126"><defs><linearGradient id="wl" x1="0" y1="0" x2="0.3" y2="1"><stop offset="0" stop-color="#09172a"/><stop offset="1" stop-color="#11284a"/></linearGradient><linearGradient id="wc" x1="0" y1="0" x2="1" y2="1"><stop offset="0" stop-color="#1a3a5e"/><stop offset="1" stop-color="#1d3f63"/></linearGradient><linearGradient id="sw" x1="0" y1="0" x2="0" y2="1"><stop offset="0" stop-color="#b3bac3"/><stop offset="1" stop-color="#9da7b1"/></linearGradient><radialGradient id="fc" cx="0.5" cy="0.45" r="0.6"><stop offset="0" stop-color="#dcb8aa"/><stop offset="1" stop-color="#c69c8c"/></radialGradient></defs><rect width="224" height="126" fill="#143152"/><path d="M0 0 H92 V56 L0 72 Z" fill="url(#wl)"/><path d="M0 72 L92 56 V64 L0 84 Z" fill="#1b3b5d"/><path d="M92 0 H180 V33 L140 42 L92 44 Z" fill="url(#wc)"/><path d="M180 0 H224 V24 L180 33 Z" fill="#10294a"/><path d="M140 42 L180 33 L224 24 V60 Z" fill="#17375b"/><path d="M0 84 L92 64 V126 H0 Z" fill="#163659"/><rect x="36" y="12" width="2" height="4" fill="#cfd8e0"/><rect x="41" y="13" width="2" height="2" fill="#cfd8e0"/><rect x="45" y="14" width="7" height="1.5" fill="#cfd8e0"/><circle cx="57.5" cy="10.5" r="2.2" fill="#3ba2dc"/><path d="M93 44 Q92 32 112 32 Q133 32 132 46 L135 78 Q141 100 146 126 H124 L122 92 L97 92 Q92 70 93 44 Z" fill="#3c2c23"/><ellipse cx="113" cy="63" rx="16.5" ry="24" fill="url(#fc)"/><path d="M96 50 Q98 37 112 37 Q127 37 130 50 L130 40 Q126 32 112 32 Q96 32 95 44 Z" fill="#3c2c23"/><ellipse cx="104.5" cy="59" rx="3" ry="1.8" fill="#4a3028"/><ellipse cx="120.5" cy="59" rx="3" ry="1.8" fill="#4a3028"/><ellipse cx="112" cy="76.5" rx="5" ry="2.4" fill="#7a4a46"/><path d="M50 126 Q56 92 78 84 Q96 79 108 86 Q122 90 136 86 Q156 92 162 126 Z" fill="url(#sw)"/><path d="M124 84 Q133 98 130 126 H144 Q141 100 134 82 Z" fill="#3f2d24"/></svg></div><div style="position:absolute;left:2400px;top:126px;width:48.5px;height:20px;background:#fff;"></div><div style="position:absolute;left:2447.3px;top:128px;width:1.2px;height:18px;background:#e3e5e8;"></div>
</body></html>
